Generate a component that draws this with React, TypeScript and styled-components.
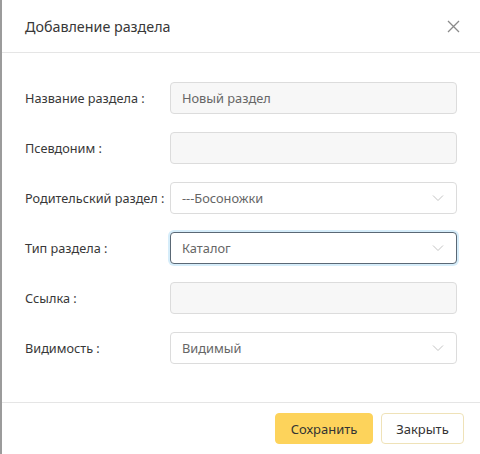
import React from 'react';
import styled, { createGlobalStyle } from 'styled-components';

const Global = createGlobalStyle`
  html, body { margin: 0; padding: 0; background: #fff; }
  body { font-family: "Noto Sans", "Open Sans", sans-serif; }
`;

const Modal = styled.div`
  width: 480px;
  height: 454px;
  box-sizing: border-box;
  border-left: 2px solid #9b9b9b;
  background: #fff;
  display: flex;
  flex-direction: column;
`;

const Header = styled.div`
  height: 53px;
  box-sizing: border-box;
  border-bottom: 1px solid #e5e5e5;
  display: flex;
  align-items: center;
  justify-content: space-between;
  padding: 0 20px 0 23px;
`;

const Title = styled.div`
  font-size: 14.3px;
  color: #383838;
`;

const Close = styled.button`
  border: none;
  background: none;
  padding: 0;
  display: flex;
  cursor: pointer;
`;

const Body = styled.div`
  flex: 1;
  padding: 29px 23px 0 23px;
  display: flex;
  flex-direction: column;
  gap: 18px;
`;

const Row = styled.div`
  display: flex;
  align-items: center;
  height: 32px;
`;

const Label = styled.div`
  width: 145px;
  font-size: 12.7px;
  color: #383838;
  white-space: nowrap;
`;

const Field = styled.div<{ $disabled?: boolean; $focused?: boolean }>`
  flex: 1;
  height: 32px;
  box-sizing: border-box;
  border-radius: 4px;
  border: 1px solid ${p => (p.$focused ? '#5a6875' : '#dcdcdc')};
  background: ${p => (p.$disabled ? '#f7f7f7' : '#fff')};
  box-shadow: ${p => (p.$focused ? '0 0 0 2px #d6edfa' : 'none')};
  display: flex;
  align-items: center;
  justify-content: space-between;
  padding: 0 12px 0 11px;
  font-size: 12.8px;
  color: #666;
`;

const Footer = styled.div`
  height: 52px;
  box-sizing: border-box;
  border-top: 1px solid #e5e5e5;
  display: flex;
  align-items: center;
  justify-content: flex-end;
  gap: 8px;
  padding: 0 16px 0 0;
`;

const Button = styled.button<{ $primary?: boolean }>`
  height: 31px;
  box-sizing: border-box;
  border-radius: 4px;
  font-family: "Noto Sans", "Open Sans", sans-serif;
  font-size: 13px;
  color: #333;
  padding: 0;
  border: 1px solid ${p => (p.$primary ? '#fdd35b' : '#efe2b8')};
  background: ${p => (p.$primary ? '#fdd35b' : '#fff')};
  width: ${p => (p.$primary ? '98px' : '83px')};
`;

const Chevron = () => (
  <svg width="12" height="8" viewBox="0 0 12 8" fill="none">
    <path d="M1 1.5 L6 6.5 L11 1.5" stroke="#c4c4c4" strokeWidth="1" />
  </svg>
);

const rows: { label: string; value?: string; type: 'input' | 'select'; focused?: boolean }[] = [
  { label: 'Название раздела :', value: 'Новый раздел', type: 'input' },
  { label: 'Псевдоним :', type: 'input' },
  { label: 'Родительский раздел :', value: '---Босоножки', type: 'select' },
  { label: 'Тип раздела :', value: 'Каталог', type: 'select', focused: true },
  { label: 'Ссылка :', type: 'input' },
  { label: 'Видимость :', value: 'Видимый', type: 'select' },
];

export default function App() {
  return (
    <>
      <Global />
      <Modal>
        <Header>
          <Title>Добавление раздела</Title>
          <Close>
            <svg width="13" height="13" viewBox="0 0 13 13">
              <path d="M1 1 L12 12 M12 1 L1 12" stroke="#8a8a8a" strokeWidth="1.3" />
            </svg>
          </Close>
        </Header>
        <Body>
          {rows.map(r => (
            <Row key={r.label}>
              <Label>{r.label}</Label>
              <Field $disabled={r.type === 'input'} $focused={r.focused}>
                <span>{r.value}</span>
                {r.type === 'select' && <Chevron />}
              </Field>
            </Row>
          ))}
        </Body>
        <Footer>
          <Button $primary>Сохранить</Button>
          <Button>Закрыть</Button>
        </Footer>
      </Modal>
    </>
  );
}
